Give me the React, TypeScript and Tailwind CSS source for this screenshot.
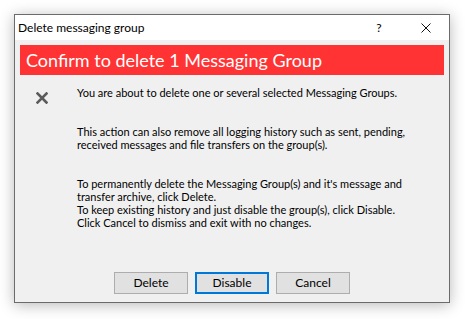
import React from "react";

const ui = { fontFamily: 'Lato, "Noto Sans", sans-serif' };

const DialogButton = ({ label, focused }: { label: string; focused?: boolean }) => (
  <button
    className={
      focused
        ? "w-[74px] h-[22px] bg-[#e1e1e1] border-2 border-[#0078d7] text-[12px] text-black leading-none"
        : "w-[74px] h-[22px] bg-[#e1e1e1] border border-[#adadad] text-[12px] text-black leading-none"
    }
  >
    {label}
  </button>
);

export default function App() {
  return (
    <div className="w-[465px] h-[319px] bg-white overflow-hidden pt-[14px] pl-[14px]" style={ui}>
      <div className="w-[436px] h-[289px] border border-[#6b6b6b] bg-[#f0f0f0] flex flex-col shadow-[0_2px_14px_rgba(0,0,0,0.28)]">
        {/* Title bar */}
        <div className="h-[25px] bg-white flex items-center shrink-0">
          <span className="pl-[3px] text-[12px] text-black">Delete messaging group</span>
          <span className="ml-auto w-[12px] text-center text-[12px] text-black mr-[36px]">?</span>
          <svg className="w-[10px] h-[10px] mr-[18px]" viewBox="0 0 10 10">
            <path d="M0.5 0.5L9.5 9.5M9.5 0.5L0.5 9.5" stroke="#111" strokeWidth={1} fill="none" />
          </svg>
        </div>

        <div className="flex-1 flex flex-col px-[5px] pt-[5px] pb-[8px]">
          {/* Banner */}
          <div className="h-[30px] bg-[#ff3333] flex items-center pl-[6px] shrink-0">
            <span className="text-[18px] text-white leading-none">Confirm to delete 1 Messaging Group</span>
          </div>

          {/* Message */}
          <div className="flex mt-[11px]">
            <div className="w-[57px] shrink-0 pl-[16px] pt-[6px]">
              <svg className="w-[12px] h-[12px]" viewBox="0 0 12 12">
                <path d="M1.5 1.5L10.5 10.5M10.5 1.5L1.5 10.5" stroke="#5b5b5b" strokeWidth={2.6} strokeLinecap="square" fill="none" />
              </svg>
            </div>
            <div className="text-[11px] leading-[13px] text-black">
              <p>You are about to delete one or several selected Messaging Groups.</p>
              <p className="mt-[26px]">
                This action can also remove all logging history such as sent, pending,
                <br />
                received messages and file transfers on the group(s).
              </p>
              <p className="mt-[26px]">
                To permanently delete the Messaging Group(s) and it's message and
                <br />
                transfer archive, click Delete.
                <br />
                To keep existing history and just disable the group(s), click Disable.
                <br />
                Click Cancel to dismiss and exit with no changes.
              </p>
            </div>
          </div>

          {/* Buttons */}
          <div className="mt-auto flex gap-[7px] pl-[94px]">
            <DialogButton label="Delete" />
            <DialogButton label="Disable" focused />
            <DialogButton label="Cancel" />
          </div>
        </div>
      </div>
    </div>
  );
}
